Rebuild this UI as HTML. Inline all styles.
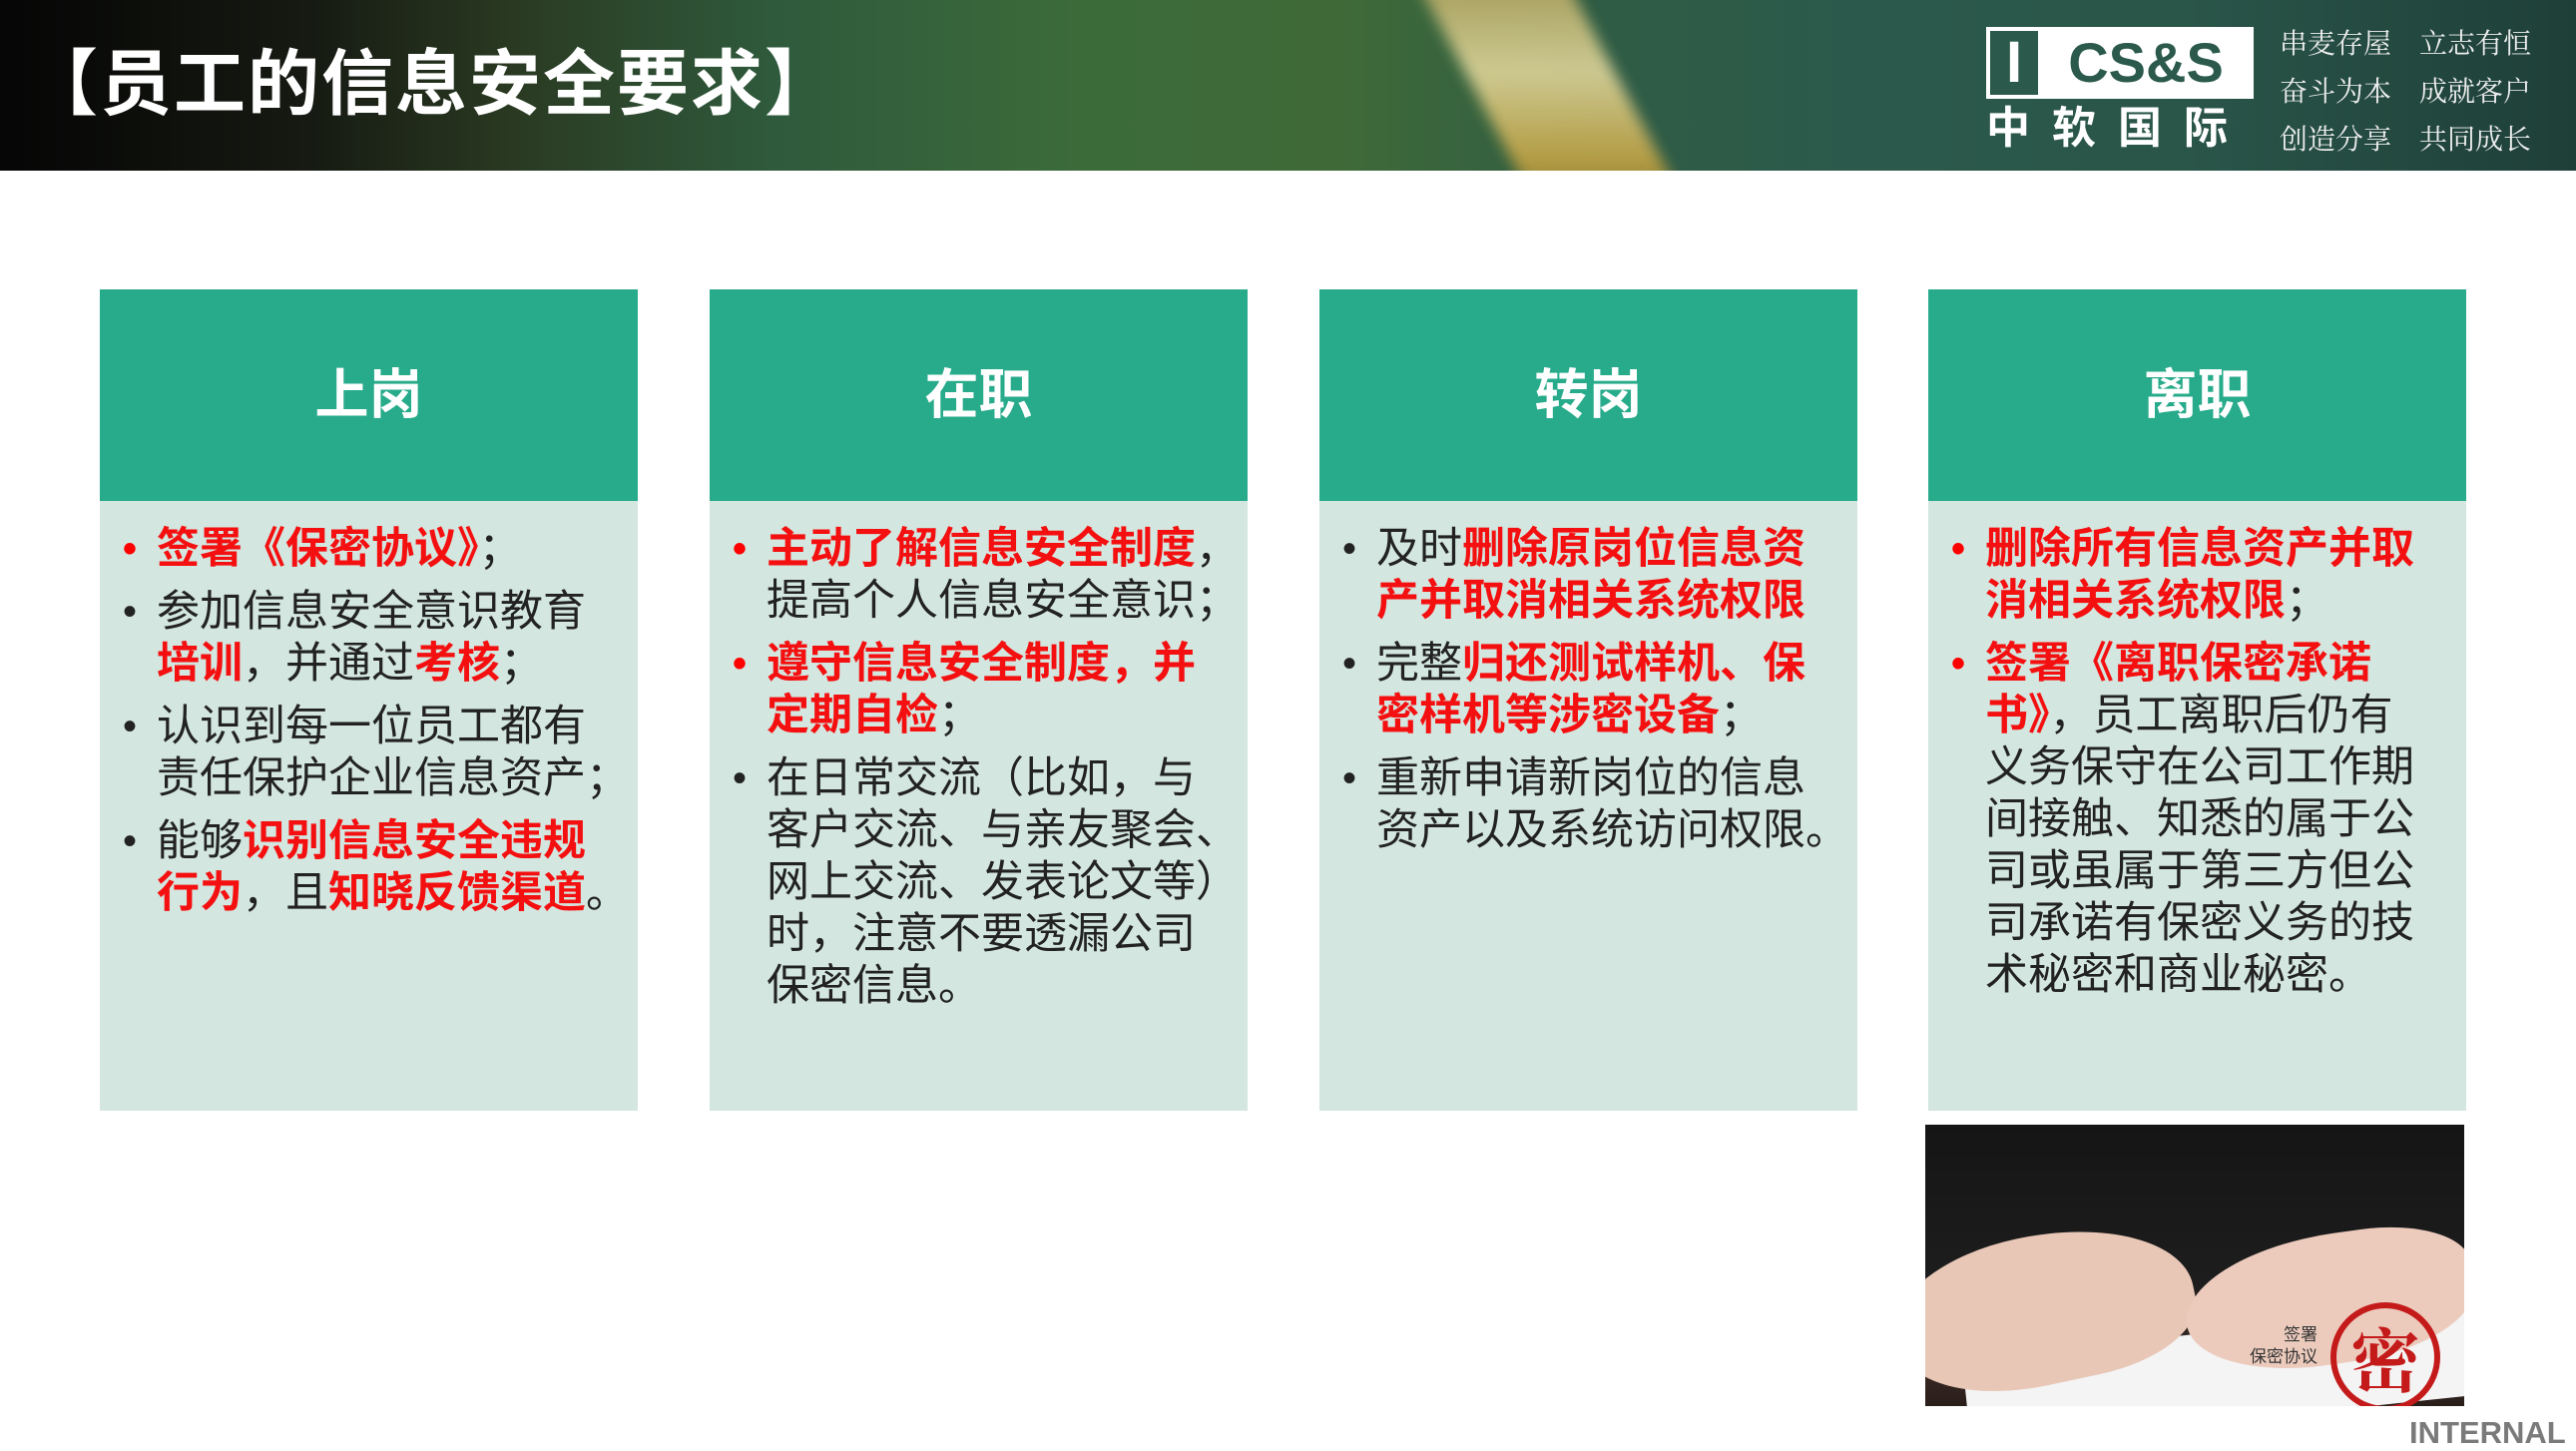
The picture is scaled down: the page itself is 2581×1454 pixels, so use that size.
<!DOCTYPE html>
<html><head><meta charset="utf-8">
<style>
*{margin:0;padding:0;box-sizing:border-box}
body{width:2581px;height:1454px;background:#fff;position:relative;overflow:hidden;font-family:"Liberation Sans","Noto Sans CJK SC",sans-serif}
.hdr{position:absolute;left:0;top:0;width:2581px;height:171px;overflow:hidden;
background:linear-gradient(90deg,#050505 0%,#161a12 12%,#2a3a22 20%,#2f5a3c 30%,#3c6b3a 42%,#3f6a38 52%,#2f5c44 62%,#2b5a4c 72%,#2a5549 85%,#1e3f38 100%)}
.river{position:absolute;left:1480px;top:-20px;width:150px;height:230px;background:linear-gradient(180deg,#b9a860,#e8dca0 40%,#c9a540 80%,#7a6a30);transform:skewX(28deg);filter:blur(8px);opacity:.85}
.title{position:absolute;left:26px;top:40px;font-size:72px;font-weight:bold;color:#fff;letter-spacing:2px;line-height:90px;white-space:nowrap}
.logo{position:absolute;left:1990px;top:27px;width:268px;height:72px;border:4px solid #fff;background:#fff}
.logo .i{position:absolute;left:0;top:0;width:48px;height:64px;background:#2b5a4c;color:#fff;font-size:58px;font-weight:bold;text-align:center;line-height:64px}
.logo .c{position:absolute;left:52px;top:0;width:208px;height:64px;background:#fff;color:#2b5a4c;font-size:56px;font-weight:bold;text-align:center;line-height:64px}
.cn{position:absolute;left:1990px;top:104px;width:268px;color:#fff;font-size:44px;font-weight:bold;letter-spacing:22px;line-height:50px}
.slog{position:absolute;left:2284px;top:18px;color:#eee;font-size:28px;line-height:48px;font-family:"Noto Serif CJK SC",serif;white-space:nowrap}
.col{position:absolute;top:290px;width:539px;height:823px;background:#d3e6df}
.col .h{height:212px;background:#28ab8b;color:#fff;font-size:54px;font-weight:bold;text-align:center;line-height:212px}
.col ul{list-style:none;padding:22px 0 0 57px;font-size:43px;line-height:52px;color:#222;white-space:nowrap}
.col li{position:relative;margin-bottom:11px}
.col li:before{content:"•";position:absolute;left:-34px;top:0;color:#222;font-size:40px}
.col li.r:before{color:#f00}
.r,b{color:#f41010;font-weight:bold}
.n{color:#222;font-weight:normal}
.photo{position:absolute;left:1929px;top:1127px;width:540px;height:282px;overflow:hidden;
background:linear-gradient(180deg,#151515 0%,#1d1d1d 55%,#3a2a25 85%,#2a1e1a 100%)}
.hand1{position:absolute;left:-30px;top:110px;width:300px;height:150px;background:#e8c7b6;border-radius:50% 60% 40% 50%;transform:rotate(-12deg)}
.hand2{position:absolute;left:260px;top:110px;width:290px;height:130px;background:#eccbbd;border-radius:60% 40% 50% 50%;transform:rotate(-8deg)}
.paper{position:absolute;left:40px;top:205px;width:560px;height:90px;background:#f4f4f4;transform:rotate(-6deg)}
.seal{position:absolute;left:406px;top:178px;width:110px;height:110px;border:6px solid #c41a1a;border-radius:50%;color:#c41a1a;font-size:70px;font-weight:bold;text-align:center;line-height:98px;font-family:"Noto Serif CJK SC",serif}
.sl{position:absolute;left:325px;top:200px;font-size:17px;color:#333;line-height:22px;text-align:right}
.internal{position:absolute;left:2414px;top:1418px;font-size:31px;font-weight:bold;color:#7a7a7a}
</style></head><body>
<div class="hdr"><div class="river"></div>
<div class="title">【员工的信息安全要求】</div>
<div class="logo"><div class="i">I</div><div class="c">CS&amp;S</div></div>
<div class="cn">中软国际</div>
<div class="slog">串麦存屋　立志有恒<br>奋斗为本　成就客户<br>创造分享　共同成长</div>
</div>

<div class="col" style="left:100px"><div class="h">上岗</div><ul>
<li class="r"><b>签署《保密协议》</b><span class="n">；</span></li>
<li>参加信息安全意识教育<br><b>培训</b>，并通过<b>考核</b>；</li>
<li>认识到每一位员工都有<br>责任保护企业信息资产；</li>
<li>能够<b>识别信息安全违规<br>行为</b>，且<b>知晓反馈渠道</b>。</li>
</ul></div>

<div class="col" style="left:711px"><div class="h">在职</div><ul>
<li class="r"><b>主动了解信息安全制度</b><span class="n">，<br>提高个人信息安全意识；</span></li>
<li class="r"><b>遵守信息安全制度，并<br>定期自检</b><span class="n">；</span></li>
<li>在日常交流（比如，与<br>客户交流、与亲友聚会、<br>网上交流、发表论文等）<br>时，注意不要透漏公司<br>保密信息。</li>
</ul></div>

<div class="col" style="left:1322px"><div class="h">转岗</div><ul>
<li>及时<b>删除原岗位信息资<br>产并取消相关系统权限</b></li>
<li>完整<b>归还测试样机、保<br>密样机等涉密设备</b>；</li>
<li>重新申请新岗位的信息<br>资产以及系统访问权限。</li>
</ul></div>

<div class="col" style="left:1932px"><div class="h">离职</div><ul>
<li class="r"><b>删除所有信息资产并取<br>消相关系统权限</b><span class="n">；</span></li>
<li class="r"><b>签署《离职保密承诺<br>书》</b><span class="n">，员工离职后仍有<br>义务保守在公司工作期<br>间接触、知悉的属于公<br>司或虽属于第三方但公<br>司承诺有保密义务的技<br>术秘密和商业秘密。</span></li>
</ul></div>

<div class="photo"><div class="paper"></div><div class="hand1"></div><div class="hand2"></div>
<div class="sl">签署<br>保密协议</div><div class="seal">密</div></div>
<div class="internal">INTERNAL</div>
</body></html>
